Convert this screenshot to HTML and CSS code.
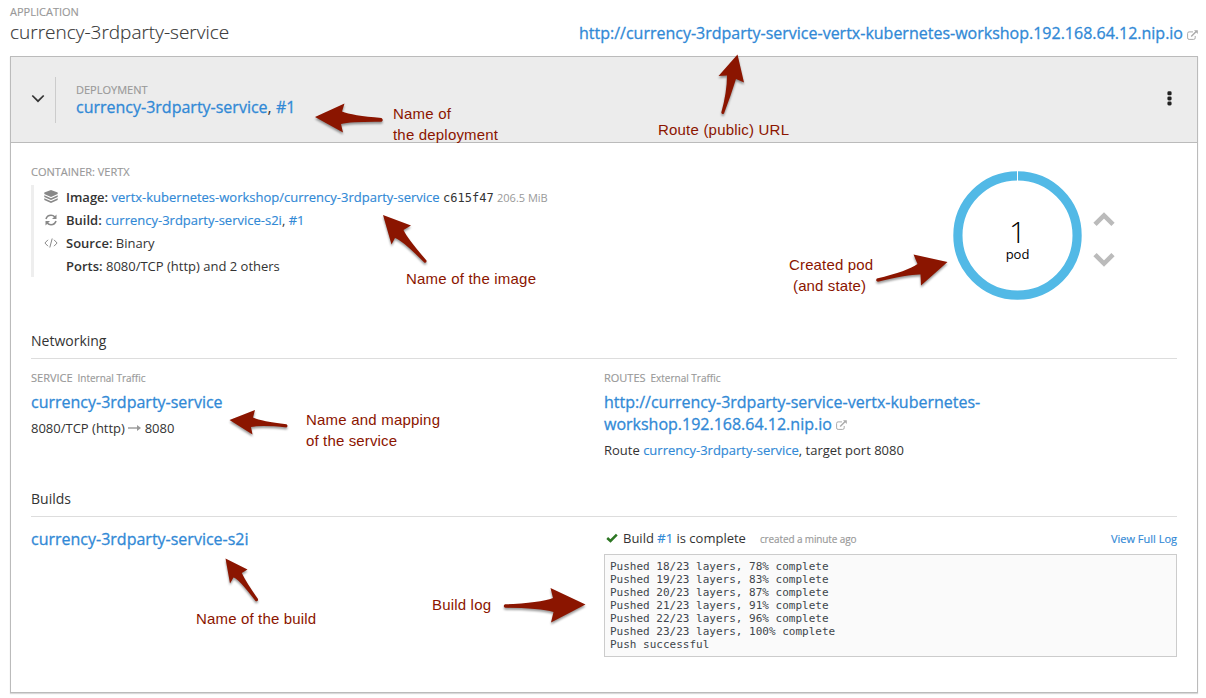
FILE: index.html
```html
<!DOCTYPE html>
<html lang="en">
<head>
<meta charset="utf-8">
<title>currency-3rdparty-service</title>
<link rel="stylesheet" href="styles.css">
</head>
<body>
<svg class="defs" width="0" height="0">
  <symbol id="ext" viewBox="0 0 11 10">
    <path d="M6 1.9H2.1Q.6 1.9 .6 3.4V7.9Q.6 9.4 2.1 9.4H6.7Q8.2 9.4 8.2 7.9V6" fill="none" stroke="currentColor" stroke-width="1"/>
    <path d="M4.2 6.6L9.2 1.6" stroke="currentColor" stroke-width="1.4"/>
    <path d="M7 .2H10.8V4Z" fill="currentColor"/>
  </symbol>
</svg>
<header class="app">
  <div>
    <div class="label">APPLICATION</div>
    <h1 class="title">currency-3rdparty-service</h1>
  </div>
  <div class="route-top"><a class="big url">http://currency-3rdparty-service-vertx-kubernetes-workshop.192.168.64.12.nip.io</a><svg class="ext"><use href="#ext"/></svg></div>
</header>
<main class="panel">
  <div class="panel-head">
    <svg class="chev" viewBox="0 0 14 9"><path d="M1.3 1.5L7 7.2L12.7 1.5" fill="none" stroke="#333" stroke-width="1.7"/></svg>
    <div class="deploy">
      <div class="label">DEPLOYMENT</div>
      <div class="big dep-name"><a>currency-3rdparty-service</a>, <a>#1</a></div>
    </div>
    <svg class="kebab" viewBox="0 0 5 15"><g fill="#222"><rect x=".4" y=".3" width="4.2" height="4" rx="1.4"/><rect x=".4" y="5.4" width="4.2" height="4" rx="1.4"/><rect x=".4" y="10.5" width="4.2" height="4" rx="1.4"/></g></svg>
  </div>
  <div class="body">
    <section class="container-row">
      <div>
        <div class="label cont-label">CONTAINER: VERTX</div>
        <div class="facts">
          <div class="fact"><svg class="ic" viewBox="0 0 14 14"><path d="M7 0L13.700 2.400V4L7 7L.3 4V2.400Z" fill="#888"/><path d="M.3 5.200V7L7 10L13.700 7V5.200L7 8.200Z M.3 8.300V10L7 13L13.700 10V8.300L7 11.200Z" fill="#888"/></svg><span class="f1"><b>Image:</b> <a>vertx-kubernetes-workshop/currency-3rdparty-service</a> <code>c615f47</code> <small>206.5 MiB</small></span></div>
          <div class="fact"><svg class="ic" viewBox="0 0 14 14"><g fill="none" stroke="#888" stroke-width="1.6"><path d="M2 6Q3.1 2.3 7 2.3Q9.2 2.3 10.9 4"/><path d="M12 8Q10.9 11.7 7 11.7Q4.8 11.7 3.1 10"/></g><path d="M12.5 1.5V6H8Z M1.5 12.5V8H6Z" fill="#888"/></svg><span class="f2"><b>Build:</b> <a>currency-3rdparty-service-s2i</a>, <a>#1</a></span></div>
          <div class="fact"><svg class="ic" viewBox="0 0 14 14"><path d="M4 3.8L.9 7L4 10.2M10 3.8L13.1 7L10 10.2M8.2 2.5L5.8 11.5" fill="none" stroke="#888" stroke-width="1"/></svg><span class="f3"><b>Source:</b> Binary</span></div>
          <div class="fact"><span class="ic"></span><span class="f4"><b>Ports:</b> 8080/TCP (http) and 2 others</span></div>
        </div>
      </div>
      <div class="pods">
        <div class="donut">
          <svg class="ring" viewBox="0 0 129 129"><circle cx="64.5" cy="64.5" r="59.6" fill="none" stroke="#52b9e6" stroke-width="9.2"/><path d="M64.5 0V10" stroke="#fff" stroke-width="1"/></svg>
          <div class="count"><span class="num">1</span><span class="unit">pod</span></div>
        </div>
        <div class="scale">
          <svg viewBox="0 0 22 15"><path d="M2 12.4L11 3.4L20 12.4" fill="none" stroke="#bbb" stroke-width="4.600"/></svg>
          <svg viewBox="0 0 22 15"><path d="M2 2.6L11 11.6L20 2.6" fill="none" stroke="#bbb" stroke-width="4.600"/></svg>
        </div>
      </div>
    </section>
    <h2>Networking</h2>
    <section class="cols net">
      <div>
        <div class="label net-label">SERVICE <small>Internal Traffic</small></div>
        <div class="big l22"><a>currency-3rdparty-service</a></div>
        <div class="detail">8080/TCP (http) <svg class="to" viewBox="0 0 13 8"><path d="M0 4H10" stroke="#999" stroke-width="1.4"/><path d="M9 1L13 4L9 7Z" fill="#999"/></svg> 8080</div>
      </div>
      <div>
        <div class="label net-label">ROUTES <small>External Traffic</small></div>
        <div class="big l22"><a>http://currency-3rdparty-service-vertx-kubernetes-<br>workshop.192.168.64.12.nip.io</a> <svg class="ext in"><use href="#ext"/></svg></div>
        <div class="detail">Route <a>currency-3rdparty-service</a>, target port 8080</div>
      </div>
    </section>
    <h2>Builds</h2>
    <section class="cols builds">
      <div class="big build-name"><a>currency-3rdparty-service-s2i</a></div>
      <div>
        <div class="status"><svg class="check" viewBox="0 0 12 10"><path d="M1.2 5L4.5 8L10.8 1.7" fill="none" stroke="#2d7623" stroke-width="2.5"/></svg><span class="st">Build <a>#1</a> is complete</span><span class="age">created a minute ago</span><a class="full">View Full Log</a></div>
        <pre class="log">Pushed 18/23 layers, 78% complete
Pushed 19/23 layers, 83% complete
Pushed 20/23 layers, 87% complete
Pushed 21/23 layers, 91% complete
Pushed 22/23 layers, 96% complete
Pushed 23/23 layers, 100% complete
Push successful</pre>
      </div>
    </section>
  </div>
</main>
<svg class="notes" viewBox="0 0 1206 698">
  <g class="arrows">
    <path d="M315 117L344.5 103.5L342 111.5Q352 115.5 381.5 118Q384 120 381.5 121.8Q352 121.5 341 124L343 132.5Z"/>
    <path d="M737.5 54.5L718.5 76L727 75.5Q727 92 721.3 112.5Q722 115 724 113.5Q731 95 736 79L744 82.5Z"/>
    <path d="M383 215L411 225.5L403.5 230Q407 238 426.5 260.5Q427 263 424.5 262.8Q402 240 395 238L391.5 244.5Z"/>
    <path d="M947.5 262L913.5 254.5L917.5 264Q908 271 876.8 278.5Q875 281 878 281.8Q910 274 920.5 274.5L921 285.5Z"/>
    <path d="M229.5 420L255 410L253 417.5Q262 421.5 286.5 424.3Q288.5 426 286.5 427.5Q262 425 251 427L252.5 434.5Z"/>
    <path d="M225.500 558.500L247.5 569.5L241.8 573Q246 582 258 599Q258.5 602 255.5 601Q238 578 233.5 577.5L230 583.5Z"/>
    <path d="M585.5 604.5L550.5 588L553 598Q540 603 505 604.3Q502.500 606 505 607.8Q540 608 553.5 612L551 622.500Z"/>
  </g>
  <g class="captions">
    <text x="393" y="119" textLength="58">Name of</text>
    <text x="393" y="140" textLength="105">the deployment</text>
    <text x="658" y="135" textLength="131">Route (public) URL</text>
    <text x="406" y="284" textLength="130">Name of the image</text>
    <text x="789" y="270" textLength="84">Created pod</text>
    <text x="793" y="291" textLength="73">(and state)</text>
    <text x="306" y="425" textLength="134">Name and mapping</text>
    <text x="306" y="446" textLength="91">of the service</text>
    <text x="196" y="624" textLength="120">Name of the build</text>
    <text x="432" y="610" textLength="59">Build log</text>
  </g>
</svg>
</body>
</html>
```
FILE: styles.css
```css
* { box-sizing: border-box; }
body { margin: 0; width: 1206px; height: 698px; overflow: hidden; position: relative; background: #fff; color: #333; font: 13px/23px "Open Sans", sans-serif; }
svg { display: block; flex: none; }
a { color: #3189d6; }
.defs { position: absolute; }
.label { font-size: 11px; line-height: 16px; color: #999; -webkit-text-stroke: 0.15px #999; }
.facts a, .detail a, .st a, .full { -webkit-text-stroke: 0.15px #3189d6; }
.big a, .url { -webkit-text-stroke: 0.3px #3189d6; }
.big { font-size: 16px; }
.app { display: flex; justify-content: space-between; height: 56px; padding: 4px 8px 0 10px; }
.title { margin: 0; font-size: 19px; font-weight: 300; line-height: 24px; -webkit-text-stroke: 0.12px #333; }
.route-top { display: flex; padding-top: 17px; line-height: 24px; }
.ext { width: 11px; height: 10px; color: #aaa; margin: 9px 0 0 4px; }
.panel { margin: 0 8px 0 10px; height: 637px; border: 1px solid #bbb; box-shadow: 0 1px 1px rgba(0,0,0,.15); }
.panel-head { display: flex; align-items: center; height: 86px; background: #ececec; border-bottom: 1px solid #bbb; padding-right: 25px; }
.chev { width: 14px; height: 9px; margin: 0 0 2px 20px; }
.deploy { flex: 1; margin-left: 10px; padding: 4px 0 0 20px; height: 46px; border-left: 1px solid #ccc; }
.deploy .label { padding-top: 1px; }
.dep-name { line-height: 18px; }
.kebab { width: 5px; height: 15px; margin-bottom: 2px; }
.body { padding: 0 20px; }
.container-row { display: flex; justify-content: space-between; height: 187px; }
.cont-label { padding-top: 21px; height: 42px; }
.facts { border-left: 3px solid #eee; height: 92px; }
.fact { display: flex; align-items: center; height: 23px; padding-left: 10px; white-space: pre; padding-top: 1px; }
.ic { width: 14px; height: 14px; margin-right: 8px; }
.facts b { font-weight: 600; }
code { font: 12px "DejaVu Sans Mono", monospace; }
small { font-size: 11px; color: #999; }
.pods { display: flex; padding: 28px 62px 0 0; }
.donut { display: grid; width: 129px; height: 129px; }
.ring, .count { grid-area: 1 / 1; }
.ring { width: 129px; height: 129px; }
.count { display: flex; flex-direction: column; align-items: center; color: #000; padding-top: 47px; }
.num { font-size: 30px; font-weight: 300; line-height: 28px; }
.unit { line-height: 16px; }
.scale { display: flex; flex-direction: column; gap: 25px; padding: 41px 0 0 11px; }
.scale svg { width: 22px; height: 15px; }
h2 { margin: 0; height: 29px; font-size: 14px; font-weight: 400; line-height: 22px; border-bottom: 1px solid #ddd; }
.cols { display: grid; grid-template-columns: 573px 573px; }
.net { height: 129px; padding-top: 11px; }
.net-label { height: 21px; }
.net-label small { font-size: 10px; margin-left: 2px; }
.l22 { line-height: 22px; }
.detail { display: flex; white-space: pre; align-items: center; height: 30px; }
.to { width: 13px; height: 8px; }
.in { display: inline-block; margin: 0; }
.builds { padding-top: 10px; }
.build-name { line-height: 24px; }
.status { display: flex; height: 27px; line-height: 22px; }
.check { width: 12px; height: 10px; margin: 6px 5px 0 2px; }
.age { font-size: 10px; color: #999; margin-left: 14px; line-height: 24px; letter-spacing: -0.12px; -webkit-text-stroke: 0.15px #999; }
.full { margin-left: auto; font-size: 11px; line-height: 23px; }
.log { margin: 0; height: 103px; padding: 5px; border: 1px solid #ccc; background: #fafafa; color: #40464c; font: 11px/13px "DejaVu Sans Mono", monospace; }
.notes { position: absolute; left: 0; top: 0; width: 1206px; height: 698px; pointer-events: none; }
.arrows { fill: #8b1500; filter: drop-shadow(0 2px 1px rgba(0,0,0,.4)); }
.captions { fill: #8b1500; font: 15px "Liberation Sans", sans-serif; }
```
